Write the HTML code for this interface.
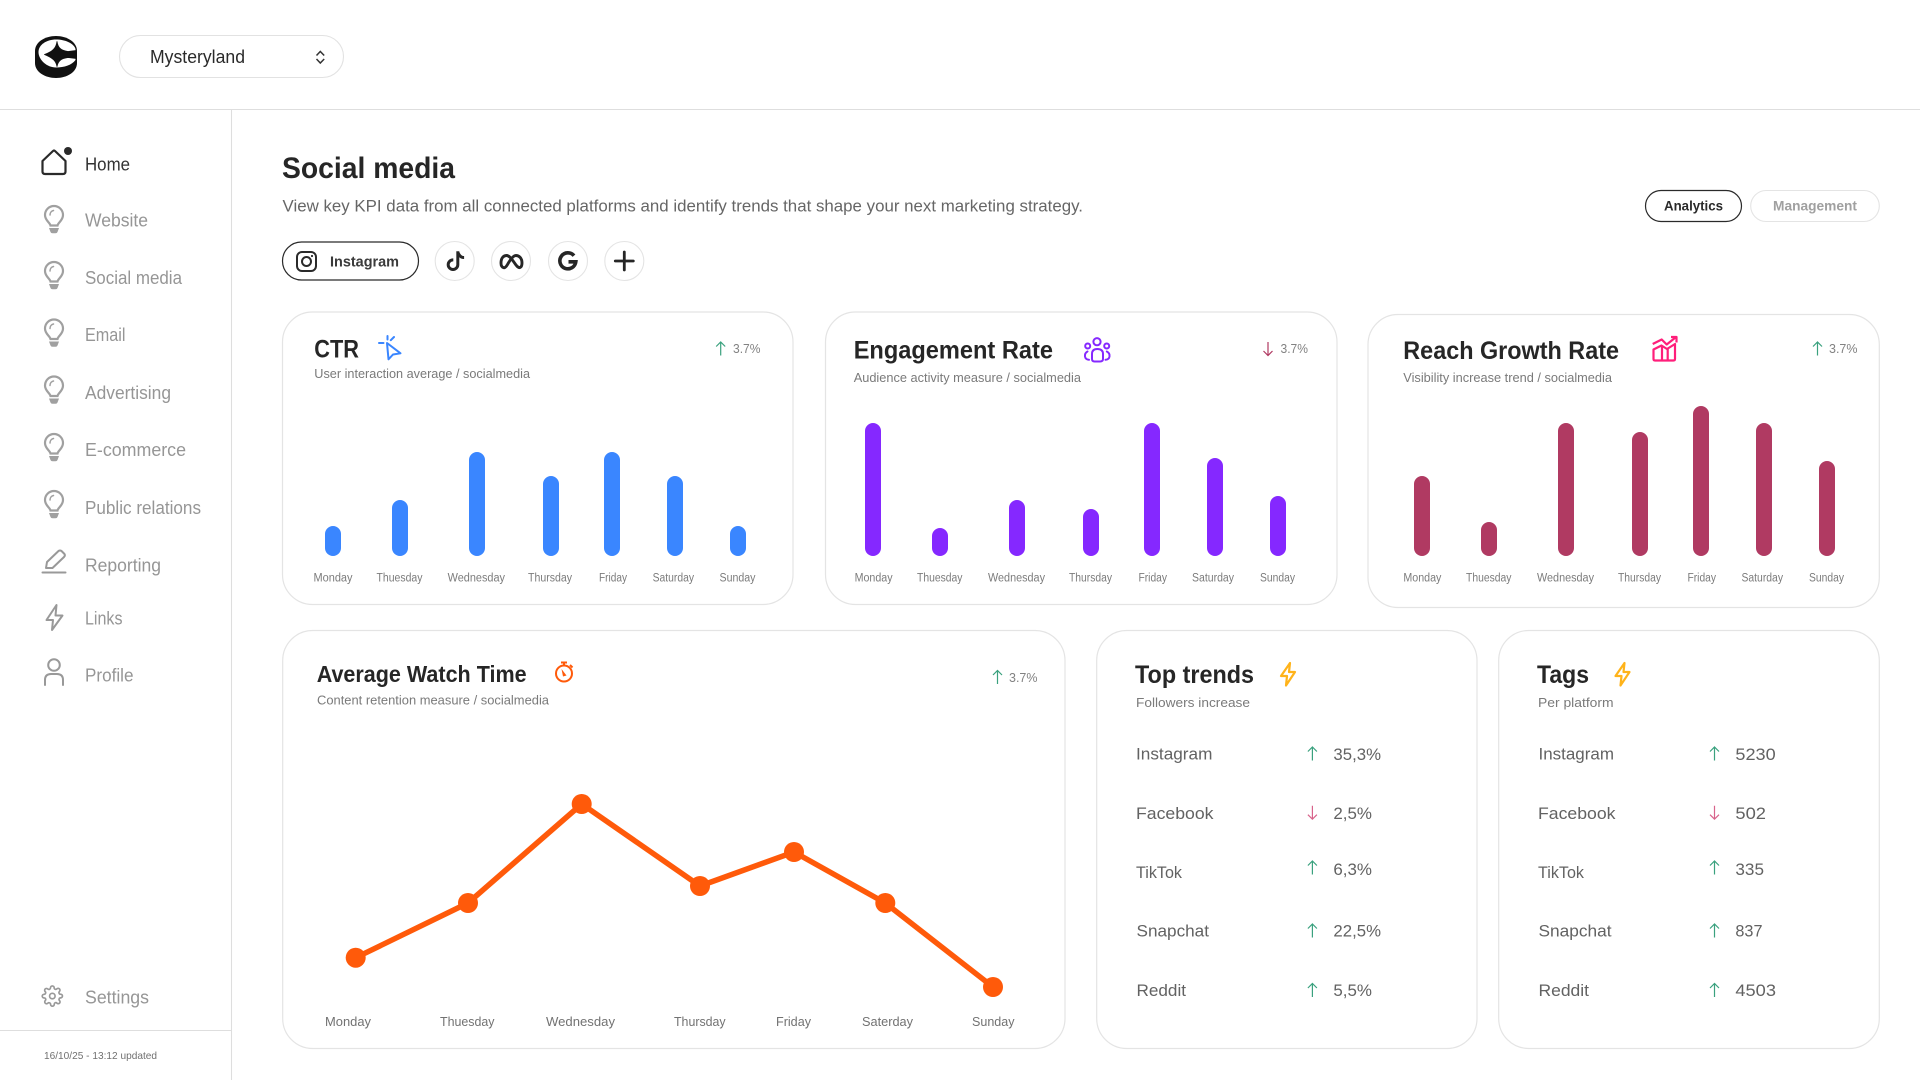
<!DOCTYPE html>
<html lang="en">
<head>
<meta charset="utf-8">
<title>Social media</title>
<style>
html,body{margin:0;padding:0;background:#fff;width:1920px;height:1080px;overflow:hidden}
svg{display:block}
text{font-family:"Liberation Sans",sans-serif;white-space:pre}
.nav{font-size:18px;fill:#969696}
.t{font-size:25px;font-weight:700;fill:#262626}
.s{font-size:13px;fill:#7a7a7a}
.l{font-size:11.5px;fill:#7c7c7c}
.l2{font-size:13px;fill:#727272}
.p{font-size:13px;fill:#828282}
.r{font-size:17px;fill:#626262}
.card{fill:#fff;stroke:#e4e4e4;stroke-width:1.2}
.up{fill:none;stroke:#3aa17e;stroke-width:1.2}
.dn{fill:none;stroke:#d8638b;stroke-width:1.2}
.ic{fill:none;stroke:#999;stroke-width:2;stroke-linejoin:round;stroke-linecap:round}
</style>
</head>
<body>
<svg width="1920" height="1080" viewBox="0 0 1920 1080" xmlns="http://www.w3.org/2000/svg">
<defs>
<g id="bulb"><path d="M-3.5 19.5C-4 16.5-9 14.5-9 9A9 9 0 1 1 9 9C9 14.5 4 16.5 3.5 19.5Z" fill="none" stroke="#a0a0a0" stroke-width="2.2"/><path d="M-5 22H5L3.500 26Q3 27.300 1.500 27.300H-1.500Q-3 27.300-3.500 26Z" fill="#a0a0a0"/><path d="M-4 9A4.500 4.500 0 0 1-.5 4.500" fill="none" stroke="#a0a0a0" stroke-width="1.500" stroke-linecap="round"/></g>
<path id="au" d="M0 13.500V0M-4.500 4.500L0 0L4.500 4.500"/>
<path id="ad" d="M0 0V13.500M-4.500 9L0 13.500L4.500 9"/>
</defs>

<rect width="1920" height="1080" fill="#fff"/>
<path d="M0 109.500H1920M231.500 109.500V1080M0 1030.500H231.500" stroke="#dedede" stroke-width="1.100" fill="none"/>

<!-- logo -->
<path d="M35 51C35 42 45 36 56 36C67 36 77 42 77 51V63C77 72 67 78 56 78C45 78 35 72 35 63Z" fill="#111"/>
<path d="M38.500 52C38.500 44.500 47 39.500 56 39.500C65.500 39.500 74 43.500 75.500 49V60C72 65 64 67.500 56 67.500C47 67.500 38.500 60 38.500 52Z" fill="#fff"/>
<path d="M57 41.500C58 48 61 50.500 68 51.500L76 50.500V58.500L68 57.500C61 58.500 58 61 57 66.500C56 61 53 58 44.500 54.500C53 51.500 56 48 57 41.500Z" fill="#111" stroke="#111" stroke-width=".8" stroke-linejoin="round"/>

<!-- dropdown -->
<rect x="119.500" y="35.500" width="224" height="42" rx="21" fill="#fff" stroke="#e2e2e2" stroke-width="1.100"/>
<text x="150" y="63" font-size="18" fill="#2a2a2a" textLength="95" lengthAdjust="spacingAndGlyphs">Mysteryland</text>
<path d="M316.500 55.500L320.300 51.500L324.200 55.500M316.500 59L320.300 63L324.200 59" fill="none" stroke="#333" stroke-width="1.500"/>

<!-- nav -->
<path d="M42.500 161L53 151Q54 150 55 151L65.500 161V171.500Q65.500 174 63 174H45Q42.500 174 42.500 171.500Z" fill="none" stroke="#2a2a2a" stroke-width="2.200" stroke-linejoin="round"/>
<circle cx="68" cy="151" r="5.500" fill="#fff"/><circle cx="68" cy="151" r="4" fill="#2a2a2a"/>
<text class="nav" style="fill:#333" x="85" y="170.500" textLength="45" lengthAdjust="spacingAndGlyphs">Home</text>

<use href="#bulb" x="54" y="206"/>
<text class="nav" x="85" y="226.500" textLength="63" lengthAdjust="spacingAndGlyphs">Website</text>
<use href="#bulb" x="54" y="262"/>
<text class="nav" x="85" y="284" textLength="97" lengthAdjust="spacingAndGlyphs">Social media</text>
<use href="#bulb" x="54" y="319.500"/>
<text class="nav" x="85" y="341" textLength="40.500" lengthAdjust="spacingAndGlyphs">Email</text>
<use href="#bulb" x="54" y="376.500"/>
<text class="nav" x="85" y="399" textLength="86" lengthAdjust="spacingAndGlyphs">Advertising</text>
<use href="#bulb" x="54" y="434"/>
<text class="nav" x="85" y="456" textLength="101" lengthAdjust="spacingAndGlyphs">E-commerce</text>
<use href="#bulb" x="54" y="491"/>
<text class="nav" x="85" y="514" textLength="116" lengthAdjust="spacingAndGlyphs">Public relations</text>
<path class="ic" d="M46 568L47 562L58.500 551Q60 550 61.500 551L64.500 554Q65.500 555.500 64 557L52.500 568Z"/>
<path class="ic" d="M42.500 572.500H65.500"/>
<text class="nav" x="85" y="571.500" textLength="76" lengthAdjust="spacingAndGlyphs">Reporting</text>
<path class="ic" d="M56.500 605L46.500 620H53L52 630L62.500 615.500H55.500Z"/>
<text class="nav" x="85" y="624.500" textLength="37.500" lengthAdjust="spacingAndGlyphs">Links</text>
<circle cx="54" cy="665" r="5.800" fill="none" stroke="#999" stroke-width="2"/>
<path class="ic" d="M45 685V680Q45 674 51 674H57Q63 674 63 680V685" stroke-linecap="butt"/>
<text class="nav" x="85" y="681.500" textLength="48.500" lengthAdjust="spacingAndGlyphs">Profile</text>
<g transform="translate(41.300 985) scale(.92)" fill="none" stroke="#999" stroke-width="1.800"><path d="M12 15a3 3 0 1 0 0-6 3 3 0 0 0 0 6z"/><path d="M19.400 15a1.650 1.650 0 0 0 .33 1.820l.06.06a2 2 0 0 1 0 2.830 2 2 0 0 1-2.830 0l-.06-.06a1.650 1.650 0 0 0-1.820-.33 1.650 1.650 0 0 0-1 1.510V21a2 2 0 0 1-2 2 2 2 0 0 1-2-2v-.09A1.650 1.650 0 0 0 9 19.400a1.650 1.650 0 0 0-1.820.33l-.06.06a2 2 0 0 1-2.830 0 2 2 0 0 1 0-2.830l.06-.06a1.650 1.650 0 0 0 .33-1.820 1.650 1.650 0 0 0-1.510-1H3a2 2 0 0 1-2-2 2 2 0 0 1 2-2h.09A1.650 1.650 0 0 0 4.600 9a1.650 1.650 0 0 0-.33-1.820l-.06-.06a2 2 0 0 1 0-2.830 2 2 0 0 1 2.830 0l.06.06a1.650 1.650 0 0 0 1.820.33H9a1.650 1.650 0 0 0 1-1.510V3a2 2 0 0 1 2-2 2 2 0 0 1 2 2v.09a1.650 1.650 0 0 0 1 1.510 1.650 1.650 0 0 0 1.820-.33l.06-.06a2 2 0 0 1 2.830 0 2 2 0 0 1 0 2.830l-.06.06a1.650 1.650 0 0 0-.33 1.820V9a1.650 1.650 0 0 0 1.510 1H21a2 2 0 0 1 2 2 2 2 0 0 1-2 2h-.09a1.650 1.650 0 0 0-1.510 1z"/></g>
<text class="nav" x="85" y="1003.500" textLength="64" lengthAdjust="spacingAndGlyphs">Settings</text>
<text x="44" y="1059" font-size="10.500" fill="#707070" textLength="113" lengthAdjust="spacingAndGlyphs">16/10/25 - 13:12 updated</text>

<!-- heading -->
<text x="282" y="178" font-size="29.500" font-weight="700" fill="#262626" textLength="173" lengthAdjust="spacingAndGlyphs">Social media</text>
<text x="282.500" y="211.500" font-size="17" fill="#666" textLength="800.500" lengthAdjust="spacingAndGlyphs">View key KPI data from all connected platforms and identify trends that shape your next marketing strategy.</text>

<!-- platform -->
<rect x="282.500" y="242" width="136" height="38" rx="19" fill="#fff" stroke="#2a2a2a" stroke-width="1.200"/>
<rect x="297" y="252" width="19" height="19" rx="5" fill="none" stroke="#2a2a2a" stroke-width="2"/>
<circle cx="306.500" cy="261.500" r="4.500" fill="none" stroke="#2a2a2a" stroke-width="2"/><circle cx="312" cy="256" r="1.100" fill="#2a2a2a"/>
<text x="330" y="266.500" font-size="15" font-weight="700" fill="#3a3a3a" textLength="69" lengthAdjust="spacingAndGlyphs">Instagram</text>
<g fill="#fff" stroke="#e4e4e4" stroke-width="1.100"><circle cx="454.700" cy="261" r="19.500"/><circle cx="511" cy="261" r="19.500"/><circle cx="568" cy="261" r="19.500"/><circle cx="624.300" cy="261" r="19.500"/></g>
<g transform="translate(445.800 251.500) scale(1.200)" fill="#262626" stroke="#262626" stroke-width=".5"><path d="M9 0h1.980c.144.715.54 1.617 1.235 2.512C12.895 3.389 13.797 4 15 4v2c-1.753 0-3.070-.814-4-1.829V11a5 5 0 1 1-5-5v2a3 3 0 1 0 3 3V0Z"/></g>
<path d="M501 263C501 258 503.500 255.500 506.500 255.500C510 255.500 513 261 516 265C517.500 267 519 267.900 520 267.500C521.300 267 522 265 522 263C522 258 519 255.500 516 255.500C513 255.500 510 260 507.500 264.500C506 267 505 268 503.800 267.700C502 267.300 501 265.500 501 263Z" fill="none" stroke="#262626" stroke-width="2.900"/>
<path d="M574 255.700A8 8 0 1 0 575.800 261.800H568.500" fill="none" stroke="#262626" stroke-width="3.600"/>
<path d="M615.300 261H633.300M624.300 252V270" stroke="#262626" stroke-width="2.800" stroke-linecap="round" fill="none"/>

<!-- tabs -->
<rect x="1645.500" y="190.500" width="96" height="31" rx="15.500" fill="#fff" stroke="#2a2a2a" stroke-width="1.200"/>
<text x="1664" y="210.500" font-size="13.500" font-weight="700" fill="#2a2a2a" textLength="59" lengthAdjust="spacingAndGlyphs">Analytics</text>
<rect x="1750.700" y="190.500" width="128.600" height="31" rx="15.500" fill="#fff" stroke="#e4e4e4" stroke-width="1.100"/>
<text x="1773" y="210.500" font-size="13.500" font-weight="700" fill="#a0a0a0" textLength="84" lengthAdjust="spacingAndGlyphs">Management</text>

<!-- card 1 -->
<rect class="card" x="282.500" y="312" width="510.500" height="292.500" rx="30"/>
<text class="t" x="314.300" y="357.300" textLength="44.700" lengthAdjust="spacingAndGlyphs">CTR</text>
<g fill="none" stroke="#3a86ff" stroke-width="2" stroke-linejoin="round" stroke-linecap="round"><path d="M387 343L400.500 353.300L393 354.500L388.500 359.300Z"/><path d="M379 343H383.500M387.500 336V339.500M394 337L390.800 340.200"/></g>
<text class="s" x="314.300" y="378" textLength="215.700" lengthAdjust="spacingAndGlyphs">User interaction average / socialmedia</text>
<use href="#au" class="up" x="720.700" y="342"/>
<text class="p" x="733" y="353" textLength="27.500" lengthAdjust="spacingAndGlyphs">3.7%</text>
<g fill="#3a86ff">
<rect x="325" y="526" width="16" height="30" rx="8"/>
<rect x="392" y="500" width="16" height="56" rx="8"/>
<rect x="469" y="452" width="16" height="104" rx="8"/>
<rect x="543" y="476" width="16" height="80" rx="8"/>
<rect x="604" y="452" width="16" height="104" rx="8"/>
<rect x="667" y="476" width="16" height="80" rx="8"/>
<rect x="730" y="526" width="16" height="30" rx="8"/>
</g>
<text class="l" x="313.500" y="581.300" textLength="39" lengthAdjust="spacingAndGlyphs">Monday</text>
<text class="l" x="376.500" y="581.300" textLength="46" lengthAdjust="spacingAndGlyphs">Thuesday</text>
<text class="l" x="447.600" y="581.300" textLength="57.400" lengthAdjust="spacingAndGlyphs">Wednesday</text>
<text class="l" x="528" y="581.300" textLength="44" lengthAdjust="spacingAndGlyphs">Thursday</text>
<text class="l" x="599" y="581.300" textLength="28" lengthAdjust="spacingAndGlyphs">Friday</text>
<text class="l" x="652.600" y="581.300" textLength="41.400" lengthAdjust="spacingAndGlyphs">Saturday</text>
<text class="l" x="719.500" y="581.300" textLength="36" lengthAdjust="spacingAndGlyphs">Sunday</text>

<!-- card 2 -->
<rect class="card" x="825.500" y="312" width="511.500" height="292.500" rx="30"/>
<text class="t" x="853.700" y="358.500" textLength="199.300" lengthAdjust="spacingAndGlyphs">Engagement Rate</text>
<g fill="none" stroke="#8528ff" stroke-width="2" stroke-linecap="round"><circle cx="1097" cy="341.700" r="3.600"/><circle cx="1087.700" cy="346" r="2.500"/><circle cx="1106.700" cy="346" r="2.500"/><path d="M1092 359V354Q1092 349 1097.300 349Q1103 349 1103 354V359Q1103 361.500 1100 361.500H1094.500Q1092 361.500 1092 359Z"/><path d="M1087.500 351.500Q1084.500 353 1085 356.500Q1085.500 359.500 1089 359.800M1106.800 351.500Q1110 353 1109.500 356.500Q1109 359.500 1105.500 359.800"/></g>
<text class="s" x="853.700" y="382" textLength="227.300" lengthAdjust="spacingAndGlyphs">Audience activity measure / socialmedia</text>
<use href="#ad" class="dn" style="stroke:#b03a62" x="1268" y="342"/>
<text class="p" x="1280.500" y="352.800" textLength="27.500" lengthAdjust="spacingAndGlyphs">3.7%</text>
<g fill="#8528ff">
<rect x="865" y="423" width="16" height="133" rx="8"/>
<rect x="932" y="528" width="16" height="28" rx="8"/>
<rect x="1009" y="500" width="16" height="56" rx="8"/>
<rect x="1083" y="509" width="16" height="47" rx="8"/>
<rect x="1144" y="423" width="16" height="133" rx="8"/>
<rect x="1207" y="458" width="16" height="98" rx="8"/>
<rect x="1270" y="496" width="16" height="60" rx="8"/>
</g>
<text class="l" x="854.600" y="581.300" textLength="38" lengthAdjust="spacingAndGlyphs">Monday</text>
<text class="l" x="917" y="581.300" textLength="45.500" lengthAdjust="spacingAndGlyphs">Thuesday</text>
<text class="l" x="988" y="581.300" textLength="57" lengthAdjust="spacingAndGlyphs">Wednesday</text>
<text class="l" x="1069" y="581.300" textLength="43" lengthAdjust="spacingAndGlyphs">Thursday</text>
<text class="l" x="1138.500" y="581.300" textLength="28.500" lengthAdjust="spacingAndGlyphs">Friday</text>
<text class="l" x="1192" y="581.300" textLength="42" lengthAdjust="spacingAndGlyphs">Saturday</text>
<text class="l" x="1260" y="581.300" textLength="35" lengthAdjust="spacingAndGlyphs">Sunday</text>

<!-- card 3 -->
<rect class="card" x="1368" y="314.500" width="511.300" height="293" rx="30"/>
<text class="t" x="1403.300" y="359" textLength="215.700" lengthAdjust="spacingAndGlyphs">Reach Growth Rate</text>
<g fill="none" stroke="#ff1f7a" stroke-width="2.200" stroke-linejoin="round"><path d="M1653.500 349.500L1661.500 345.500L1667 349L1675 344V359Q1675 360.500 1673.500 360.500H1655Q1653.500 360.500 1653.500 359Z"/><path d="M1662 346V360M1667.700 349V360"/><path d="M1652.700 344L1661.700 339.500L1666.700 344.500L1675.500 337.500"/><path d="M1671 337H1676.500V342.500"/></g>
<text class="s" x="1403.300" y="382" textLength="208.700" lengthAdjust="spacingAndGlyphs">Visibility increase trend / socialmedia</text>
<use href="#au" class="up" x="1817.500" y="342"/>
<text class="p" x="1829" y="353" textLength="28.500" lengthAdjust="spacingAndGlyphs">3.7%</text>
<g fill="#b03a62">
<rect x="1414" y="476" width="16" height="80" rx="8"/>
<rect x="1481" y="522" width="16" height="34" rx="8"/>
<rect x="1558" y="423" width="16" height="133" rx="8"/>
<rect x="1632" y="432" width="16" height="124" rx="8"/>
<rect x="1693" y="406" width="16" height="150" rx="8"/>
<rect x="1756" y="423" width="16" height="133" rx="8"/>
<rect x="1819" y="461" width="16" height="95" rx="8"/>
</g>
<text class="l" x="1403.400" y="581.300" textLength="38" lengthAdjust="spacingAndGlyphs">Monday</text>
<text class="l" x="1466" y="581.300" textLength="45.500" lengthAdjust="spacingAndGlyphs">Thuesday</text>
<text class="l" x="1537" y="581.300" textLength="57" lengthAdjust="spacingAndGlyphs">Wednesday</text>
<text class="l" x="1618" y="581.300" textLength="43" lengthAdjust="spacingAndGlyphs">Thursday</text>
<text class="l" x="1687.500" y="581.300" textLength="28.500" lengthAdjust="spacingAndGlyphs">Friday</text>
<text class="l" x="1741.500" y="581.300" textLength="41.500" lengthAdjust="spacingAndGlyphs">Saturday</text>
<text class="l" x="1809" y="581.300" textLength="35" lengthAdjust="spacingAndGlyphs">Sunday</text>

<!-- card 4 -->
<rect class="card" x="282.700" y="630.500" width="782.300" height="418" rx="30"/>
<text class="t" x="316.700" y="682" style="font-size:23.500px" textLength="209.900" lengthAdjust="spacingAndGlyphs">Average Watch Time</text>
<g fill="none" stroke="#ff5a0a" stroke-width="2"><circle cx="564" cy="673.500" r="8"/><path d="M561 662.500H567M564 662.500V665.500M570 665L572.500 667.500"/></g>
<path d="M561.500 669L566.500 675.500L563 676.500Z" fill="#ff5a0a"/>
<text class="s" x="317" y="704.300" textLength="232" lengthAdjust="spacingAndGlyphs">Content retention measure / socialmedia</text>
<use href="#au" class="up" x="997.500" y="670.500"/>
<text class="p" x="1009" y="682" textLength="28.500" lengthAdjust="spacingAndGlyphs">3.7%</text>
<polyline points="355.700,957.700 468,903 581.700,804 700,886 794,852 885.300,903 993,987" fill="none" stroke="#ff5a0a" stroke-width="5.500"/>
<g fill="#ff5a0a"><circle cx="355.700" cy="957.700" r="10"/><circle cx="468" cy="903" r="10"/><circle cx="581.700" cy="804" r="10"/><circle cx="700" cy="886" r="10"/><circle cx="794" cy="852" r="10"/><circle cx="885.300" cy="903" r="10"/><circle cx="993" cy="987" r="10"/></g>
<text class="l2" x="325" y="1026" textLength="46" lengthAdjust="spacingAndGlyphs">Monday</text>
<text class="l2" x="440" y="1026" textLength="54.500" lengthAdjust="spacingAndGlyphs">Thuesday</text>
<text class="l2" x="546" y="1026" textLength="69" lengthAdjust="spacingAndGlyphs">Wednesday</text>
<text class="l2" x="674" y="1026" textLength="51.600" lengthAdjust="spacingAndGlyphs">Thursday</text>
<text class="l2" x="776" y="1026" textLength="35" lengthAdjust="spacingAndGlyphs">Friday</text>
<text class="l2" x="862" y="1026" textLength="51" lengthAdjust="spacingAndGlyphs">Saterday</text>
<text class="l2" x="972" y="1026" textLength="42.500" lengthAdjust="spacingAndGlyphs">Sunday</text>

<!-- card 5 -->
<rect class="card" x="1096.700" y="630.500" width="380.300" height="418" rx="30"/>
<text class="t" x="1135" y="683" textLength="119" lengthAdjust="spacingAndGlyphs">Top trends</text>
<path d="M1290 663L1281 676H1287L1286 685.500L1295 672H1289Z" fill="none" stroke="#ffb31a" stroke-width="2.200" stroke-linejoin="round"/>
<text class="s" x="1136" y="707" textLength="114" lengthAdjust="spacingAndGlyphs">Followers increase</text>
<text class="r" x="1136" y="759.300" textLength="76.400" lengthAdjust="spacingAndGlyphs">Instagram</text>
<text class="r" x="1136" y="819" textLength="77.500" lengthAdjust="spacingAndGlyphs">Facebook</text>
<text class="r" x="1136" y="878" textLength="46" lengthAdjust="spacingAndGlyphs">TikTok</text>
<text class="r" x="1136.500" y="936.700" textLength="72.500" lengthAdjust="spacingAndGlyphs">Snapchat</text>
<text class="r" x="1136.500" y="996" textLength="49.500" lengthAdjust="spacingAndGlyphs">Reddit</text>
<use href="#au" class="up" x="1312.400" y="747"/>
<use href="#ad" class="dn" x="1312.400" y="805.700"/>
<use href="#au" class="up" x="1312.400" y="861"/>
<use href="#au" class="up" x="1312.400" y="924"/>
<use href="#au" class="up" x="1312.400" y="983.500"/>
<text class="r" x="1333.400" y="760" textLength="47.600" lengthAdjust="spacingAndGlyphs">35,3%</text>
<text class="r" x="1333.400" y="819" textLength="38.600" lengthAdjust="spacingAndGlyphs">2,5%</text>
<text class="r" x="1333.400" y="875" textLength="38.600" lengthAdjust="spacingAndGlyphs">6,3%</text>
<text class="r" x="1333.400" y="936.700" textLength="47.600" lengthAdjust="spacingAndGlyphs">22,5%</text>
<text class="r" x="1333.400" y="996" textLength="38.600" lengthAdjust="spacingAndGlyphs">5,5%</text>

<!-- card 6 -->
<rect class="card" x="1498.700" y="630.500" width="380.600" height="418" rx="30"/>
<text class="t" x="1537" y="683" textLength="52" lengthAdjust="spacingAndGlyphs">Tags</text>
<path d="M1624.500 663L1615.500 676H1621.500L1620.500 685.500L1629.500 672H1623.500Z" fill="none" stroke="#ffb31a" stroke-width="2.200" stroke-linejoin="round"/>
<text class="s" x="1538" y="707" textLength="75.600" lengthAdjust="spacingAndGlyphs">Per platform</text>
<text class="r" x="1538.500" y="759.300" textLength="75.500" lengthAdjust="spacingAndGlyphs">Instagram</text>
<text class="r" x="1538" y="819" textLength="77.500" lengthAdjust="spacingAndGlyphs">Facebook</text>
<text class="r" x="1538" y="878" textLength="46" lengthAdjust="spacingAndGlyphs">TikTok</text>
<text class="r" x="1538.500" y="936.700" textLength="73" lengthAdjust="spacingAndGlyphs">Snapchat</text>
<text class="r" x="1538.500" y="996" textLength="50.500" lengthAdjust="spacingAndGlyphs">Reddit</text>
<use href="#au" class="up" x="1714.500" y="747"/>
<use href="#ad" class="dn" x="1714.500" y="805.700"/>
<use href="#au" class="up" x="1714.500" y="861"/>
<use href="#au" class="up" x="1714.500" y="924"/>
<use href="#au" class="up" x="1714.500" y="983.500"/>
<text class="r" x="1735.400" y="760" textLength="40.300" lengthAdjust="spacingAndGlyphs">5230</text>
<text class="r" x="1735.400" y="819" textLength="30.600" lengthAdjust="spacingAndGlyphs">502</text>
<text class="r" x="1735.400" y="875" textLength="28.600" lengthAdjust="spacingAndGlyphs">335</text>
<text class="r" x="1735.400" y="936.700" textLength="27.100" lengthAdjust="spacingAndGlyphs">837</text>
<text class="r" x="1735.400" y="996" textLength="40.600" lengthAdjust="spacingAndGlyphs">4503</text>
</svg>
</body>
</html>
